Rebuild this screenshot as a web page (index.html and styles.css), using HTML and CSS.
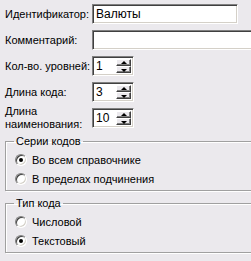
FILE: index.html
```html
<!DOCTYPE html>
<html>
<head>
  <title>Параметры справочника</title>
  <link rel="stylesheet" href="styles.css">
</head>
<body>

<div class="panel">
  <div class="row">
    <label class="lbl">Идентификатор:</label>
    <div class="edit edit-id">Валюты</div>
  </div>
  <div class="row">
    <label class="lbl">Комментарий:</label>
    <div class="edit edit-wide"></div>
  </div>
  <div class="row">
    <label class="lbl">Кол-во. уровней:</label>
    <div class="edit spin">
      <span class="spin-val">1</span>
      <span class="spin-btns"><span class="sb up"></span><span class="sb down"></span></span>
    </div>
  </div>
  <div class="row">
    <label class="lbl">Длина кода:</label>
    <div class="edit spin">
      <span class="spin-val">3</span>
      <span class="spin-btns"><span class="sb up"></span><span class="sb down"></span></span>
    </div>
  </div>
  <div class="row row-tall">
    <label class="lbl">Длина<br>наименования:</label>
    <div class="edit spin">
      <span class="spin-val">10</span>
      <span class="spin-btns"><span class="sb up"></span><span class="sb down"></span></span>
    </div>
  </div>

  <fieldset class="group">
    <legend>Серии кодов</legend>
    <div class="opt"><span class="radio on"></span>Во всем справочнике</div>
    <div class="opt"><span class="radio"></span>В пределах подчинения</div>
  </fieldset>

  <fieldset class="group">
    <legend>Тип кода</legend>
    <div class="opt"><span class="radio"></span>Числовой</div>
    <div class="opt"><span class="radio on"></span>Текстовый</div>
  </fieldset>
</div>

</body>
</html>
```

FILE: styles.css
```css
body {
  margin: 0;
  background-color: #ebe9ed;
  font-family: "Liberation Sans", Arial, sans-serif;
  font-size: 11px;
  color: #000;
}
/* the dialog runs on past the right edge, so clip it there */
.panel {
  padding: 4px 0 0 5px;
  width: 246px;
  height: 257px;
  overflow: hidden;
}
/* label + control rows */
.row {
  display: flex;
  align-items: center;
  margin-bottom: 6px;
}
.row-tall {
  margin-top: -3px;
  margin-bottom: 4px;
}
.lbl {
  flex: none;
  width: 87px;
  line-height: 13px;
}
/* sunken edit box */
.edit {
  flex: none;
  box-sizing: border-box;
  height: 20px;
  background-color: #fff;
  border: 1px solid;
  border-color: #808080 #fff #fff #808080;
  box-shadow: inset 1px 1px 0 #404040, inset -1px -1px 0 #d4d0c8;
  padding: 2px 0 0 3px;
  line-height: 14px;
  font-size: 12px;
}
.edit-id {
  width: 146px;
}
.edit-wide {
  width: 170px;
}
.spin {
  width: 42px;
  display: flex;
  padding: 2px 2px 2px 3px;
}
.spin-val {
  flex: 1;
}
.spin-btns {
  display: flex;
  flex-direction: column;
  width: 15px;
}
.sb {
  position: relative;
  box-sizing: border-box;
  height: 8px;
  background-color: #ebe9ed;
  border: 1px solid;
  border-color: #fff #404040 #404040 #fff;
  box-shadow: inset -1px -1px 0 #808080;
}
.sb::after {
  content: "";
  position: absolute;
  left: 4px;
  border-left: 3px solid transparent;
  border-right: 3px solid transparent;
}
.sb.up::after {
  top: 1px;
  border-bottom: 3px solid #000;
}
.sb.down::after {
  top: 2px;
  border-top: 3px solid #000;
}
/* etched group boxes */
.group {
  margin: 0 0 6px 0;
  width: 262px;
  box-sizing: border-box;
  border: 1px solid #a0a0a0;
  box-shadow: 1px 1px 0 #fff, inset 1px 1px 0 #fff;
  padding: 2px 0 2px 9px;
}
.group legend {
  padding: 0 2px;
  margin-left: -1px;
  line-height: 13px;
}
.opt {
  display: flex;
  align-items: center;
  height: 19px;
}
.radio {
  position: relative;
  box-sizing: border-box;
  width: 12px;
  height: 12px;
  margin-right: 5px;
  border-radius: 50%;
  background-color: #fff;
  border: 1px solid;
  border-color: #808080 #fff #fff #808080;
  box-shadow: inset 1px 1px 0 #404040, inset -1px -1px 0 #d4d0c8;
}
.radio.on::after {
  content: "";
  position: absolute;
  left: 3px;
  top: 3px;
  width: 4px;
  height: 4px;
  border-radius: 50%;
  background-color: #000;
}
```
